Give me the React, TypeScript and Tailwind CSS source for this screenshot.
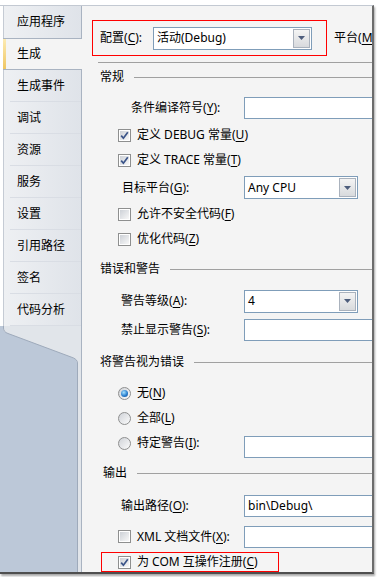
import React from 'react'

const tabs = ['应用程序', '生成', '生成事件', '调试', '资源', '服务', '设置', '引用路径', '签名', '代码分析']

function Acc({ text, k, colon = false }: { text: string; k: string; colon?: boolean }) {
  return (
    <span className="whitespace-nowrap">
      {text}(<span className="underline underline-offset-[2px]">{k}</span>){colon ? ':' : ''}
    </span>
  )
}

function Check({ on = false }: { on?: boolean }) {
  return (
    <span className="w-[13px] h-[13px] shrink-0 border border-[#8e8f8f] bg-white p-px flex">
      <span className="flex-1 flex items-center justify-center bg-gradient-to-br from-[#cdd1d7] to-[#f8f8f8]">
        {on && (
          <svg width="9" height="9" viewBox="0 0 9 9" className="overflow-visible">
            <path d="M1.2 4.6 L3.4 7.2 L7.8 1.2" fill="none" stroke="#3b5489" strokeWidth="1.7" />
          </svg>
        )}
      </span>
    </span>
  )
}

function Radio({ on = false }: { on?: boolean }) {
  return (
    <span className="w-[13px] h-[13px] shrink-0 rounded-full border border-[#8e8f8f] bg-gradient-to-br from-[#d0d3d8] to-[#fbfbfb] flex items-center justify-center">
      {on && (
        <span className="w-[7px] h-[7px] rounded-full bg-[radial-gradient(circle_at_40%_35%,#a8e4ff,#2a7fcf_55%,#134b8a)]" />
      )}
    </span>
  )
}

function Combo({ value, width }: { value: string; width: string }) {
  return (
    <div className={`h-[23px] shrink-0 flex border border-[#7f9db9] bg-white ${width}`}>
      <span className="flex-1 flex items-center pl-[3px] whitespace-nowrap">{value}</span>
      <span className="w-[17px] m-px border border-[#aab2bd] bg-gradient-to-b from-[#f4f4f4] to-[#d8dadd] flex items-center justify-center">
        <svg width="7" height="4" viewBox="0 0 7 4">
          <path d="M0 0 H7 L3.5 4 Z" fill="#4d5d7c" />
        </svg>
      </span>
    </div>
  )
}

function Field({ value = '' }: { value?: string }) {
  return (
    <div className="h-[22px] w-[140px] shrink-0 border border-[#7f9db9] bg-white flex items-center pl-[3px] whitespace-nowrap">
      {value}
    </div>
  )
}

export default function App() {
  return (
    <div className="w-[377px] h-[577px] bg-white pt-[5px] overflow-hidden text-[12px] leading-none text-black font-['Noto_Sans','Noto_Sans_CJK_SC',sans-serif]">
      <div className="w-[374px] h-[569px] flex border-t border-t-[#c3c9d2] border-r-2 border-r-[#6c6c6c] border-b-2 border-b-[#4f4f4f] shadow-[1px_2px_2px_rgba(0,0,0,0.35)]">
        {/* Tabs column */}
        <aside className="w-[82px] shrink-0 flex flex-col">
          <div className="ml-[3px] flex flex-col">
            {tabs.map((t, i) =>
              t === '生成' ? (
                <div key={t} className="h-[32px] flex bg-[#f4f4f4] border-y border-[#a9b3c1]">
                  <span className="w-[3px] bg-gradient-to-b from-[#fcebb3] to-[#efc660]" />
                  <span className="flex items-center pl-[11px]">{t}</span>
                </div>
              ) : (
                <div
                  key={t}
                  className="h-[32px] flex flex-col border-l border-l-[#c5cbd4] border-r border-r-[#a9b3c1] bg-gradient-to-r from-[#eef0f3] to-[#dfe3e9]"
                >
                  <span className="flex-1 flex items-center pl-[13px]">{t}</span>
                  {tabs[i + 1] !== '生成' && <span className="h-px ml-[6px] bg-[#d9dde4]" />}
                </div>
              )
            )}
          </div>
          <svg width="82" height="37" viewBox="0 0 82 37" className="block shrink-0">
            <rect width="82" height="37" fill="#bcc8d8" />
            <path d="M3 0 V2 Q3 6 8 7.5 L71 31 Q77 33 77 37 H82 V0 Z" fill="#e1e5ea" />
            <path d="M3.5 0 V2 Q3.5 6 8 7.5 L71 31 Q77.5 33 77.5 37" fill="none" stroke="#9eaabb" />
            <line x1="81.5" y1="0" x2="81.5" y2="37" stroke="#a9b3c1" />
          </svg>
          <div className="flex-1 flex">
            <div className="w-[77px] bg-[#bcc8d8]" />
            <div className="w-[5px] bg-[#e1e5ea] border-l border-l-[#9eaabb] border-r border-r-[#a9b3c1]" />
          </div>
        </aside>

        {/* Build page */}
        <main className="flex-1 min-w-0 overflow-hidden bg-[#f4f4f4] flex flex-col pt-[14px]">
          <div className="h-[36px] flex items-center whitespace-nowrap">
            <div className="ml-[10px] w-[235px] h-[36px] shrink-0 border border-[#ff0000] flex items-center pl-[7px]">
              <span className="w-[53px] shrink-0">
                <Acc text="配置" k="C" colon />
              </span>
              <Combo value="活动(Debug)" width="w-[159px]" />
            </div>
            <span className="ml-[7px]">
              <Acc text="平台" k="M" colon />
            </span>
          </div>
          <div className="mt-[6px] ml-[16px] h-px bg-[#a0a0a0] shrink-0" />

          <div className="h-[28px] flex items-center pl-[18px]">
            <span className="whitespace-nowrap">常规</span>
            <span className="flex-1 h-px bg-[#a0a0a0] ml-[10px]" />
          </div>
          <div className="h-[34px] flex items-center pl-[49px]">
            <span className="w-[113px] shrink-0">
              <Acc text="条件编译符号" k="Y" colon />
            </span>
            <Field />
          </div>
          <div className="h-[20px] flex items-center pl-[36px] gap-[6px]">
            <Check on />
            <Acc text="定义 DEBUG 常量" k="U" />
          </div>
          <div className="h-[30px] flex items-center pl-[36px] gap-[6px]">
            <Check on />
            <Acc text="定义 TRACE 常量" k="T" />
          </div>
          <div className="h-[25px] flex items-center pl-[40px]">
            <span className="w-[122px] shrink-0">
              <Acc text="目标平台" k="G" colon />
            </span>
            <Combo value="Any CPU" width="w-[114px]" />
          </div>
          <div className="h-[28px] flex items-center pl-[36px] gap-[6px]">
            <Check />
            <Acc text="允许不安全代码" k="F" />
          </div>
          <div className="h-[22px] flex items-center pl-[36px] gap-[6px]">
            <Check />
            <Acc text="优化代码" k="Z" />
          </div>

          <div className="h-[38px] flex items-center pl-[18px]">
            <span className="whitespace-nowrap">错误和警告</span>
            <span className="flex-1 h-px bg-[#a0a0a0] ml-[10px]" />
          </div>
          <div className="h-[26px] flex items-center pl-[39px]">
            <span className="w-[123px] shrink-0">
              <Acc text="警告等级" k="A" colon />
            </span>
            <Combo value="4" width="w-[114px]" />
          </div>
          <div className="h-[32px] flex items-center pl-[39px]">
            <span className="w-[123px] shrink-0">
              <Acc text="禁止显示警告" k="S" colon />
            </span>
            <Field />
          </div>

          <div className="h-[32px] flex items-center pl-[18px]">
            <span className="whitespace-nowrap">将警告视为错误</span>
            <span className="flex-1 h-px bg-[#a0a0a0] ml-[10px]" />
          </div>
          <div className="h-[30px] flex items-center pl-[36px] gap-[6px]">
            <Radio on />
            <Acc text="无" k="N" />
          </div>
          <div className="h-[20px] flex items-center pl-[36px] gap-[6px]">
            <Radio />
            <Acc text="全部" k="L" />
          </div>
          <div className="h-[30px] flex pl-[36px]">
            <div className="w-[126px] shrink-0 flex items-center gap-[6px]">
              <Radio />
              <Acc text="特定警告" k="I" colon />
            </div>
            <div className="self-end">
              <Field />
            </div>
          </div>

          <div className="h-[30px] flex items-center pl-[21px]">
            <span className="whitespace-nowrap">输出</span>
            <span className="flex-1 h-px bg-[#a0a0a0] ml-[10px]" />
          </div>
          <div className="h-[35px] flex items-center pl-[39px]">
            <span className="w-[123px] shrink-0">
              <Acc text="输出路径" k="O" colon />
            </span>
            <Field value="bin\Debug\" />
          </div>
          <div className="h-[27px] flex items-center pl-[36px]">
            <div className="w-[126px] shrink-0 flex items-center gap-[6px]">
              <Check />
              <Acc text="XML 文档文件" k="X" colon />
            </div>
            <Field />
          </div>
          <div className="mt-[2px] ml-[19px] w-[178px] h-[20px] shrink-0 border border-[#ff0000] flex items-center pl-[16px] gap-[6px]">
            <Check on />
            <Acc text="为 COM 互操作注册" k="C" />
          </div>
        </main>
      </div>
    </div>
  )
}
